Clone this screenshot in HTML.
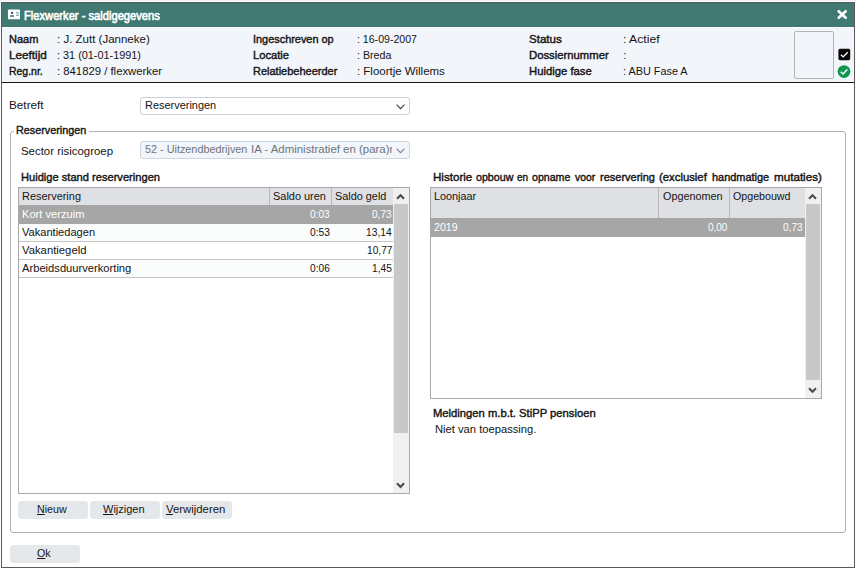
<!DOCTYPE html>
<html><head><meta charset="utf-8">
<style>
*{box-sizing:border-box;margin:0;padding:0}
html,body{width:856px;height:569px;overflow:hidden;background:#fdfdfd}
body{font-family:"Liberation Sans",sans-serif;font-size:11px;color:#141414;position:relative}
.abs{position:absolute}
.x{position:absolute;white-space:nowrap;transform-origin:0 0}
u{text-decoration:underline;text-underline-offset:1px}
.btn{position:absolute;height:18px;width:70px;background:#e4e8eb;border-radius:3px}
</style></head><body>
<div class="abs" style="left:0;top:0;width:856px;height:1px;background:#eef0f1"></div>
<div class="abs" style="left:1px;top:2px;width:854px;height:566px;border:1px solid #5a5a5a;background:#fff"></div>
<div class="abs" style="left:2px;top:3px;width:852px;height:24px;background:#3f7972"></div>
<svg class="abs" style="left:7px;top:9px" width="14" height="11" viewBox="0 0 14 11"><rect x="0.95" y="0.45" width="12.05" height="9.75" rx="0.8" fill="#fff"/><rect x="4" y="2.8" width="2.1" height="2.2" rx="0.5" fill="#2f6b63"/><rect x="3" y="6.3" width="4" height="1.5" rx="0.4" fill="#2f6b63"/><rect x="9.1" y="3.2" width="2.8" height="3.6" fill="#c9d9d6"/><rect x="9.1" y="3.2" width="2.8" height="0.8" fill="#7da7a0"/><rect x="9.1" y="6.0" width="2.8" height="0.8" fill="#7da7a0"/></svg>
<svg class="abs" style="left:836px;top:9px" width="13" height="12" viewBox="0 0 13 12"><path d="M2.7 2.3 L9.7 8.7 M9.7 2.3 L2.7 8.7" stroke="#fff" stroke-width="2.7" stroke-linecap="round"/></svg>
<div class="abs" style="left:2px;top:28px;width:852px;height:54px;background:#f2f5f9"></div>
<div class="abs" style="left:2px;top:82px;width:852px;height:1px;background:#161616"></div>

<div class="abs" style="left:794px;top:31px;width:40px;height:48px;border:1px solid #b4b4b4;border-radius:2px"></div>
<svg class="abs" style="left:838px;top:48px" width="13" height="13" viewBox="0 0 13 13"><rect x="0.4" y="0.85" width="11.8" height="11.3" rx="1.6" fill="#060606"/><path d="M2.9 6.7 L5.2 8.9 L9.7 4.2" stroke="#fff" stroke-width="1.35" fill="none"/></svg>
<svg class="abs" style="left:837px;top:64px" width="14" height="15" viewBox="0 0 14 15"><circle cx="7" cy="7.6" r="6.35" fill="#0f9650"/><path d="M3.7 7.8 L6 9.9 L10.3 5.4" stroke="#fff" stroke-width="1.4" fill="none"/></svg>

<!-- dropdowns -->
<div class="abs" style="left:140px;top:97px;width:270px;height:18px;border:1px solid #c9d1d9;border-radius:3px;background:#fff"></div>
<svg class="abs" style="left:396px;top:103.7px" width="9" height="6" viewBox="0 0 9 6"><path d="M0.5 0.7 L4.5 4.7 L8.5 0.7" stroke="#3a3a3a" stroke-width="1.05" fill="none"/></svg>

<!-- group box -->
<div class="abs" style="left:10px;top:131px;width:836px;height:402px;border:1px solid #b4b4b4;border-radius:3px"></div>
<div class="abs" style="left:14px;top:128px;width:75px;height:8px;background:#fff"></div>

<div class="abs" style="left:140px;top:141px;width:270px;height:18px;border:1px solid #cdd5dd;border-radius:3px;background:#f2f5f9"></div>
<svg class="abs" style="left:396px;top:148px" width="9" height="6" viewBox="0 0 9 6"><path d="M0.5 0.7 L4.5 4.7 L8.5 0.7" stroke="#7d8388" stroke-width="1.05" fill="none"/></svg>

<!-- left table -->
<div class="abs" style="left:18px;top:187px;width:392px;height:307px;border:1px solid #a8a8a8;background:#fff"></div>
<div class="abs" style="left:19px;top:188px;width:374px;height:17px;background:#dfe0e4"></div>
<div class="abs" style="left:269px;top:188px;width:1px;height:17px;background:#b8b8b8"></div>
<div class="abs" style="left:331px;top:188px;width:1px;height:17px;background:#b8b8b8"></div>
<div class="abs" style="left:19px;top:205px;width:374px;height:19px;background:#a6a6a6"></div>
<div class="abs" style="left:19px;top:224px;width:374px;height:17px;background:#fbfcfc"></div>
<div class="abs" style="left:19px;top:260px;width:374px;height:17px;background:#fbfcfc"></div>
<div class="abs" style="left:19px;top:241px;width:374px;height:1px;background:#c4c4c4"></div>
<div class="abs" style="left:19px;top:259px;width:374px;height:1px;background:#c4c4c4"></div>
<div class="abs" style="left:19px;top:277px;width:374px;height:1px;background:#c4c4c4"></div>
<!-- left scrollbar -->
<div class="abs" style="left:393px;top:188px;width:16px;height:305px;background:#f0f0f0"></div>
<div class="abs" style="left:394px;top:204px;width:14px;height:229px;background:#c8c8c8"></div>
<svg class="abs" style="left:396px;top:193px" width="9" height="7" viewBox="0 0 9 7"><path d="M1 5.8 L4.5 2.2 L8 5.8" stroke="#4a4a4a" stroke-width="2" fill="none"/></svg>
<svg class="abs" style="left:396px;top:481.5px" width="9" height="7" viewBox="0 0 9 7"><path d="M1 1.2 L4.5 5 L8 1.2" stroke="#4a4a4a" stroke-width="2" fill="none"/></svg>

<!-- right table -->
<div class="abs" style="left:430px;top:187px;width:392px;height:212px;border:1px solid #a8a8a8;background:#fff"></div>
<div class="abs" style="left:431px;top:188px;width:374px;height:30px;background:#dfe0e4"></div>
<div class="abs" style="left:658px;top:188px;width:1px;height:30px;background:#b8b8b8"></div>
<div class="abs" style="left:729px;top:188px;width:1px;height:30px;background:#b8b8b8"></div>
<div class="abs" style="left:431px;top:218px;width:374px;height:19px;background:#a6a6a6"></div>
<div class="abs" style="left:805px;top:188px;width:16px;height:210px;background:#f0f0f0"></div>
<div class="abs" style="left:806px;top:204px;width:14px;height:176px;background:#c8c8c8"></div>
<svg class="abs" style="left:808px;top:193px" width="9" height="7" viewBox="0 0 9 7"><path d="M1 5.8 L4.5 2.2 L8 5.8" stroke="#4a4a4a" stroke-width="2" fill="none"/></svg>
<svg class="abs" style="left:808px;top:387px" width="9" height="7" viewBox="0 0 9 7"><path d="M1 1.2 L4.5 4.8 L8 1.2" stroke="#4a4a4a" stroke-width="2" fill="none"/></svg>

<!-- buttons -->
<div class="btn" style="left:18px;top:501px"></div>
<div class="btn" style="left:90px;top:501px"></div>
<div class="btn" style="left:162px;top:501px"></div>
<div class="btn" style="left:10px;top:545px"></div>

<div class="x" id="t0" style="left:23.95px;top:9.00px;font-size:12px;line-height:14px;color:#fff;-webkit-text-stroke:0.62px #fff;transform:scaleX(0.9300);">Flexwerker - saldigegevens</div>
<div class="x" id="t1" style="left:9.28px;top:33.00px;font-size:11px;line-height:13px;color:#141414;-webkit-text-stroke:0.4px #141414;transform:scaleX(1.0002);">Naam</div>
<div class="x" id="t2" style="left:8.79px;top:49.00px;font-size:11px;line-height:13px;color:#141414;-webkit-text-stroke:0.4px #141414;transform:scaleX(1.0668);">Leeftijd</div>
<div class="x" id="t3" style="left:9.21px;top:65.00px;font-size:11px;line-height:13px;color:#141414;-webkit-text-stroke:0.4px #141414;transform:scaleX(0.9498);">Reg.nr.</div>
<div class="x" id="t4" style="left:57.19px;top:33.00px;font-size:11px;line-height:13px;color:#141414;transform:scaleX(1.0461);">: J. Zutt (Janneke)</div>
<div class="x" id="t5" style="left:57.10px;top:49.00px;font-size:11px;line-height:13px;color:#141414;transform:scaleX(0.9881);">: 31 (01-01-1991)</div>
<div class="x" id="t6" style="left:57.00px;top:65.00px;font-size:11px;line-height:13px;color:#141414;transform:scaleX(1.0287);">: 841829 / flexwerker</div>
<div class="x" id="t7" style="left:253.44px;top:33.00px;font-size:11px;line-height:13px;color:#141414;-webkit-text-stroke:0.4px #141414;transform:scaleX(0.9919);">Ingeschreven op</div>
<div class="x" id="t8" style="left:253.08px;top:49.00px;font-size:11px;line-height:13px;color:#141414;-webkit-text-stroke:0.4px #141414;transform:scaleX(1.0165);">Locatie</div>
<div class="x" id="t9" style="left:252.58px;top:65.00px;font-size:11px;line-height:13px;color:#141414;-webkit-text-stroke:0.4px #141414;transform:scaleX(0.9990);">Relatiebeheerder</div>
<div class="x" id="t10" style="left:356.77px;top:33.00px;font-size:11px;line-height:13px;color:#141414;transform:scaleX(0.9606);">: 16-09-2007</div>
<div class="x" id="t11" style="left:357.36px;top:49.00px;font-size:11px;line-height:13px;color:#141414;transform:scaleX(0.9679);">: Breda</div>
<div class="x" id="t12" style="left:357.38px;top:65.00px;font-size:11px;line-height:13px;color:#141414;transform:scaleX(1.0409);">: Floortje Willems</div>
<div class="x" id="t13" style="left:529.21px;top:33.00px;font-size:11px;line-height:13px;color:#141414;-webkit-text-stroke:0.4px #141414;transform:scaleX(1.0511);">Status</div>
<div class="x" id="t14" style="left:528.93px;top:49.00px;font-size:11px;line-height:13px;color:#141414;-webkit-text-stroke:0.4px #141414;transform:scaleX(1.0270);">Dossiernummer</div>
<div class="x" id="t15" style="left:529.02px;top:65.00px;font-size:11px;line-height:13px;color:#141414;-webkit-text-stroke:0.4px #141414;transform:scaleX(1.0262);">Huidige fase</div>
<div class="x" id="t16" style="left:622.87px;top:33.00px;font-size:11px;line-height:13px;color:#141414;transform:scaleX(1.1088);">: Actief</div>
<div class="x" id="t17" style="left:623.18px;top:49.00px;font-size:11px;line-height:13px;color:#141414;">:</div>
<div class="x" id="t18" style="left:623.16px;top:65.00px;font-size:11px;line-height:13px;color:#141414;transform:scaleX(0.9873);">: ABU Fase A</div>
<div class="x" id="t19" style="left:9.39px;top:99.00px;font-size:11px;line-height:13px;color:#141414;transform:scaleX(1.0684);">Betreft</div>
<div class="x" id="t20" style="left:145.03px;top:99.00px;font-size:11px;line-height:13px;color:#141414;transform:scaleX(0.9948);">Reserveringen</div>
<div class="x" id="t21" style="left:16.35px;top:124.00px;font-size:11px;line-height:13px;color:#141414;-webkit-text-stroke:0.4px #141414;transform:scaleX(0.9824);">Reserveringen</div>
<div class="x" id="t22" style="left:20.85px;top:145.00px;font-size:11px;line-height:13px;color:#141414;transform:scaleX(1.0387);">Sector risicogroep</div>
<div class="x" id="t23" style="left:21.18px;top:170.70px;font-size:11px;line-height:13px;color:#141414;-webkit-text-stroke:0.4px #141414;transform:scaleX(1.0103);">Huidige stand reserveringen</div>
<div class="x" id="t24" style="left:22.03px;top:190.00px;font-size:11px;line-height:13px;color:#141414;transform:scaleX(0.9944);">Reservering</div>
<div class="x" id="t25" style="left:22.21px;top:208.00px;font-size:11px;line-height:13px;color:#ffffff;transform:scaleX(1.0111);">Kort verzuim</div>
<div class="x" id="t26" style="left:21.98px;top:226.00px;font-size:11px;line-height:13px;color:#141414;transform:scaleX(1.0064);">Vakantiedagen</div>
<div class="x" id="t27" style="left:22.03px;top:244.00px;font-size:11px;line-height:13px;color:#141414;transform:scaleX(1.0268);">Vakantiegeld</div>
<div class="x" id="t28" style="left:21.94px;top:261.60px;font-size:11px;line-height:13px;color:#141414;transform:scaleX(1.0157);">Arbeidsduurverkorting</div>
<div class="x" id="t29" style="left:272.66px;top:190.00px;font-size:11px;line-height:13px;color:#141414;transform:scaleX(0.9946);">Saldo uren</div>
<div class="x" id="t30" style="left:335.42px;top:190.00px;font-size:11px;line-height:13px;color:#141414;transform:scaleX(0.9883);">Saldo geld</div>
<div class="x" id="t31" style="left:309.91px;top:208.00px;font-size:11px;line-height:13px;color:#ffffff;transform:scaleX(0.9153);">0:03</div>
<div class="x" id="t32" style="left:309.76px;top:226.00px;font-size:11px;line-height:13px;color:#141414;transform:scaleX(0.9347);">0:53</div>
<div class="x" id="t33" style="left:309.82px;top:261.60px;font-size:11px;line-height:13px;color:#141414;transform:scaleX(0.9259);">0:06</div>
<div class="x" id="t34" style="left:372.09px;top:208.00px;font-size:11px;line-height:13px;color:#ffffff;transform:scaleX(0.9140);">0,73</div>
<div class="x" id="t35" style="left:366.24px;top:226.00px;font-size:11px;line-height:13px;color:#141414;transform:scaleX(0.9320);">13,14</div>
<div class="x" id="t36" style="left:366.67px;top:244.00px;font-size:11px;line-height:13px;color:#141414;transform:scaleX(0.9250);">10,77</div>
<div class="x" id="t37" style="left:372.24px;top:261.60px;font-size:11px;line-height:13px;color:#141414;transform:scaleX(0.9311);">1,45</div>
<div class="x" id="t38" style="left:36.96px;top:503.00px;font-size:11px;line-height:13px;color:#141414;transform:scaleX(0.9703);"><u>N</u>ieuw</div>
<div class="x" id="t39" style="left:37.10px;top:546.70px;font-size:11px;line-height:13px;color:#141414;transform:scaleX(0.9700);"><u>O</u>k</div>
<div class="x" id="t41" style="left:433.83px;top:190.00px;font-size:11px;line-height:13px;color:#141414;transform:scaleX(0.9856);">Loonjaar</div>
<div class="x" id="t42" style="left:434.12px;top:220.80px;font-size:11px;line-height:13px;color:#ffffff;transform:scaleX(0.9653);">2019</div>
<div class="x" id="t43" style="left:662.96px;top:190.00px;font-size:11px;line-height:13px;color:#141414;transform:scaleX(0.9852);">Opgenomen</div>
<div class="x" id="t44" style="left:733.24px;top:190.00px;font-size:11px;line-height:13px;color:#141414;transform:scaleX(0.9683);">Opgebouwd</div>
<div class="x" id="t45" style="left:708.31px;top:220.80px;font-size:11px;line-height:13px;color:#ffffff;transform:scaleX(0.9063);">0,00</div>
<div class="x" id="t46" style="left:783.09px;top:220.80px;font-size:11px;line-height:13px;color:#ffffff;transform:scaleX(0.9140);">0,73</div>
<div class="x" id="t47" style="left:433.18px;top:406.70px;font-size:11px;line-height:13px;color:#141414;-webkit-text-stroke:0.4px #141414;transform:scaleX(1.0206);">Meldingen m.b.t. StiPP pensioen</div>
<div class="x" id="t48" style="left:435.34px;top:423.10px;font-size:11px;line-height:13px;color:#141414;transform:scaleX(1.0175);">Niet van toepassing.</div>
<div class="x" id="t49" style="left:103.26px;top:503.00px;font-size:11px;line-height:13px;color:#141414;transform:scaleX(1.0007);"><u>W</u>ijzigen</div>
<div class="x" id="t50" style="left:166.25px;top:503.00px;font-size:11px;line-height:13px;color:#141414;transform:scaleX(1.0321);"><u>V</u>erwijderen</div>
<div class="x" id="t51" style="left:144.85px;top:143.00px;font-size:11px;line-height:13px;color:#6c757d;transform:scaleX(0.9849);">52 - Uitzendbedrijven</div>
<div class="x" id="t52" style="left:432.84px;top:170.70px;font-size:11px;line-height:13px;color:#141414;-webkit-text-stroke:0.4px #141414;transform:scaleX(1.0538);">Historie</div>
<div class="x" id="t53" style="left:475.99px;top:170.70px;font-size:11px;line-height:13px;color:#141414;-webkit-text-stroke:0.4px #141414;transform:scaleX(0.9704);">opbouw</div>
<div class="x" id="t54" style="left:517.37px;top:170.70px;font-size:11px;line-height:13px;color:#141414;-webkit-text-stroke:0.4px #141414;transform:scaleX(0.9005);">en</div>
<div class="x" id="t55" style="left:531.97px;top:170.70px;font-size:11px;line-height:13px;color:#141414;-webkit-text-stroke:0.4px #141414;transform:scaleX(0.9632);">opname</div>
<div class="x" id="t56" style="left:575.22px;top:170.70px;font-size:11px;line-height:13px;color:#141414;-webkit-text-stroke:0.4px #141414;transform:scaleX(0.9431);">voor</div>
<div class="x" id="t57" style="left:599.51px;top:170.70px;font-size:11px;line-height:13px;color:#141414;-webkit-text-stroke:0.4px #141414;transform:scaleX(0.9994);">reservering</div>
<div class="x" id="t58" style="left:658.91px;top:170.70px;font-size:11px;line-height:13px;color:#141414;-webkit-text-stroke:0.4px #141414;transform:scaleX(1.0289);">(exclusief</div>
<div class="x" id="t59" style="left:711.93px;top:170.70px;font-size:11px;line-height:13px;color:#141414;-webkit-text-stroke:0.4px #141414;transform:scaleX(0.9924);">handmatige</div>
<div class="x" id="t60" style="left:773.80px;top:170.70px;font-size:11px;line-height:13px;color:#141414;-webkit-text-stroke:0.4px #141414;transform:scaleX(1.0582);">mutaties)</div>
<div class="abs" style="left:251.30px;top:143.00px;width:140.90px;height:13px;overflow:hidden"><div class="x" id="t61" style="left:0;top:0;font-size:11px;line-height:13px;color:#6c757d;transform:scaleX(1.0392);">IA - Administratief en (para)medisch</div></div>
</body></html>
